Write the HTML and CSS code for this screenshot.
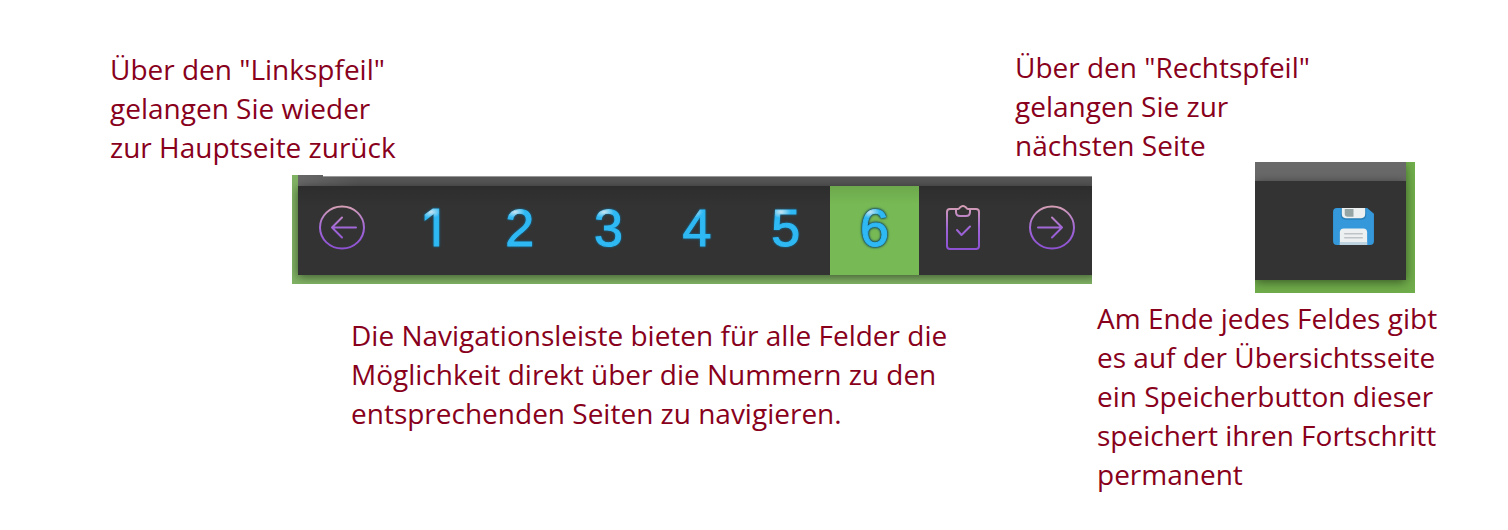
FILE: index.html
```html
<!DOCTYPE html>
<html lang="de">
<head>
<meta charset="utf-8">
<meta name="viewport" content="width=device-width, initial-scale=1">
<title>Navigationsleiste</title>
<link rel="stylesheet" href="styles.css">
</head>
<body>
<main class="guide">
  <p class="note note-back">Über den "Linkspfeil"<br>gelangen Sie wieder<br>zur Hauptseite zurück</p>
  <p class="note note-next">Über den "Rechtspfeil"<br>gelangen Sie zur<br>nächsten Seite</p>

  <div class="strip">
    <div class="strip-top"></div>
    <nav class="bar" aria-label="Seiten">
      <button class="cell" type="button" aria-label="Zurück">
        <svg class="icon" viewBox="0 0 48 48" fill="none" stroke="url(#violet)" stroke-width="2" stroke-linecap="round" stroke-linejoin="round">
          <defs>
            <linearGradient id="violet" gradientUnits="userSpaceOnUse" x1="0" y1="2" x2="0" y2="46">
              <stop offset="0" stop-color="#d6a0b4"/>
              <stop offset="0.5" stop-color="#a066d8"/>
              <stop offset="1" stop-color="#8c50d2"/>
            </linearGradient>
          </defs>
          <ellipse cx="24" cy="23.500" rx="22" ry="21"/>
          <path d="M38 23.600 14 23.500M24 13.500 14 23.500l10 10"/>
        </svg>
      </button>
      <button class="cell" type="button"><span class="digit digit-one">1</span></button>
      <button class="cell" type="button"><span class="digit">2</span></button>
      <button class="cell" type="button"><span class="digit">3</span></button>
      <button class="cell" type="button"><span class="digit">4</span></button>
      <button class="cell" type="button"><span class="digit">5</span></button>
      <button class="cell cell-active" type="button" aria-current="page"><span class="digit">6</span></button>
      <button class="cell" type="button" aria-label="Übersicht">
        <svg class="icon" viewBox="0 0 48 48" fill="none" stroke="url(#violet)" stroke-width="2" stroke-linecap="round" stroke-linejoin="round">
          <path d="M17 5h-6q-3 0-3 3v34q0 3 3 3h26q3 0 3-3V8q0-3-3-3h-6"/>
          <path d="M17 5h2q1 0 2-1.500q3-3 6 0q1 1.500 2 1.500h2v3q0 4-4 4h-6q-4 0-4-4z"/>
          <path d="m18 26 4.500 5 8.500-8.500"/>
        </svg>
      </button>
      <button class="cell" type="button" aria-label="Weiter">
        <svg class="icon" viewBox="0 0 48 48" fill="none" stroke="url(#violet)" stroke-width="2" stroke-linecap="round" stroke-linejoin="round">
          <ellipse cx="24" cy="23.500" rx="22" ry="21"/>
          <path d="M10 23.600 34 23.500M24 13.500l10 10-10 10"/>
        </svg>
      </button>
    </nav>
  </div>

  <div class="save">
    <div class="save-top"></div>
    <div class="save-bar">
      <button class="save-button" type="button" aria-label="Speichern">
        <svg class="disk" viewBox="0 0 42 38">
          <path d="M4 0h31l7 6v28q0 4-4 4H4q-4 0-4-4V4q0-4 4-4z" fill="#3498db"/>
          <path d="M8 0h26v7q0 5-5 5H13q-5 0-5-5z" fill="#2980b9"/>
          <path d="M9 0h24v6q0 4.500-4 4.500H13q-4 0-4-4.500z" fill="#ecf0f1"/>
          <path d="M12 1h9v8h-6q-3 0-3-3z" fill="#95a5a6"/>
          <path d="M7 38V25q0-4 4-4h20q4 0 4 4v13z" fill="#ecf0f1"/>
          <path d="M7 35h28v3H7z" fill="#bdd3df"/>
          <path d="M12 26.500h18M12 30.500h18" stroke="#bdc3c7" stroke-width="1.500" stroke-linecap="round"/>
        </svg>
      </button>
    </div>
  </div>

  <p class="note note-numbers">Die Navigationsleiste bieten für alle Felder die<br>Möglichkeit direkt über die Nummern zu den<br>entsprechenden Seiten zu navigieren.</p>
  <p class="note note-save">Am Ende jedes Feldes gibt<br>es auf der Übersichtsseite<br>ein Speicherbutton dieser<br>speichert ihren Fortschritt<br>permanent</p>
</main>
</body>
</html>
```
FILE: styles.css
```css
* {
  box-sizing: border-box;
}

body {
  margin: 0;
  background: #fff;
  color: #88001b;
  font-family: "Segoe UI", "Open Sans", "Noto Sans", sans-serif;
}

.guide {
  display: grid;
  grid-template-columns:
    minmax(0, 110fr) minmax(0, 182fr) minmax(0, 59fr) minmax(0, 664fr)
    minmax(0, 77fr) minmax(0, 5fr) minmax(0, 158fr) minmax(0, 160fr) minmax(0, 93fr);
  grid-template-rows: 114px 13px 109px 15px auto;
  padding: 48px 0 32px;
}

.note {
  margin: 0;
  font-size: 28px;
  line-height: 39px;
  white-space: nowrap;
}

.note-back {
  grid-area: 1 / 2 / 3 / 5;
  padding-top: 2px;
}

.note-next {
  grid-area: 1 / 5 / 3 / 8;
}

.note-numbers {
  grid-area: 5 / 4 / 6 / 6;
  padding-top: 17px;
}

.note-save {
  grid-area: 5 / 7 / 6 / 10;
}

.strip {
  grid-area: 3 / 3 / 4 / 6;
  display: flex;
  flex-direction: column;
  padding: 0 0 9px 6px;
  overflow: hidden;
  background: #80b264;
}

.strip-top {
  height: 11px;
  padding-left: 25px;
  background: linear-gradient(90deg, #686868, #565656 60px);
}

.strip-top::before {
  content: "";
  display: block;
  height: 2px;
  background: linear-gradient(#fff 1px, #999 1px);
}

.bar {
  display: flex;
  flex: 1;
  margin-right: -4px;
  background: linear-gradient(#2d2d2d, #333 20px);
  box-shadow: 0 2px 9px rgba(0, 0, 0, 0.5);
}

.cell {
  display: flex;
  flex: 1;
  align-items: center;
  justify-content: center;
  min-width: 0;
  padding: 0 0 6px;
  border: 0;
  background: none;
  cursor: pointer;
}

.cell-active {
  background: linear-gradient(#6da84d, #77b954 18px);
}

.icon {
  flex: none;
  width: 48px;
  height: 48px;
}

.digit {
  padding: 0 2px;
  font-family: "Liberation Sans", Arial, sans-serif;
  font-size: 52px;
  line-height: 58px;
  color: transparent;
  -webkit-text-stroke: 1px transparent;
  background: radial-gradient(ellipse 10px 6px at 12px 13px, #c9e5f2, #2fb9f4);
  -webkit-background-clip: text;
  background-clip: text;
  filter: drop-shadow(0 0 1px #0878ae);
}

.digit-one {
  padding: 0 0 0 4px;
  font-family: Inter, Arial, sans-serif;
  font-size: 50px;
}

.cell-active .digit {
  filter: drop-shadow(0 0 1px #104565) drop-shadow(0 0 1px #104565);
}

.save {
  grid-area: 2 / 8 / 5 / 9;
  align-self: start;
  display: flex;
  flex-direction: column;
  height: 131px;
  padding: 0 9px 13px 0;
  overflow: hidden;
  background: #70ad4b;
}

.save-top {
  height: 19px;
  background: #696969;
  box-shadow: 0 3px 9px rgba(0, 0, 0, 0.4);
}

.save-bar {
  position: relative;
  display: flex;
  flex: 1;
  justify-content: flex-end;
  background: #333;
  box-shadow: 0 2px 10px rgba(0, 0, 0, 0.5);
}

.save-button {
  display: flex;
  align-items: center;
  padding: 0 32px 8px;
  border: 0;
  background: none;
  cursor: pointer;
}

.disk {
  width: 41px;
  height: 37px;
}
```
